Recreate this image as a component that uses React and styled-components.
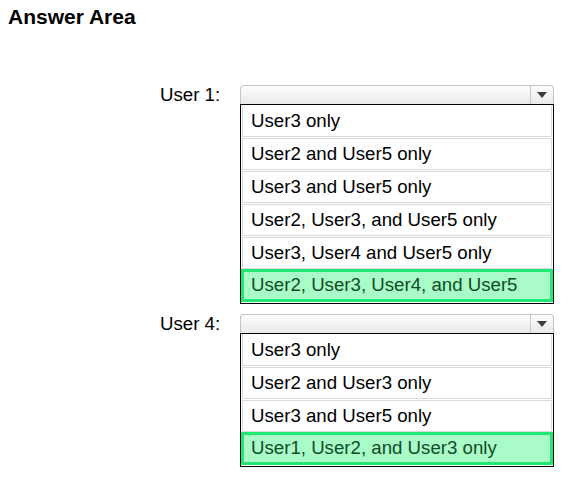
import React from 'react';
import styled, { createGlobalStyle } from 'styled-components';

const GlobalStyle = createGlobalStyle`
  body {
    margin: 0;
    background: #fff;
    font-family: Arial, "Liberation Sans", sans-serif;
    color: #000;
  }
`;

const Page = styled.div`
  padding: 5px 8px;
`;

const Title = styled.h1`
  margin: 0 0 56px;
  font-size: 21px;
  font-weight: bold;
  line-height: 24px;
`;

const Questions = styled.div`
  display: flex;
  flex-direction: column;
  gap: 10px;
  padding-left: 152px;
`;

const Row = styled.div`
  display: grid;
  grid-template-columns: 80px 314px;
`;

const Label = styled.div`
  font-size: 18.67px;
  line-height: 19px;
  height: 19px;
`;

const Control = styled.div`
  display: flex;
  flex-direction: column;
`;

const Select = styled.div`
  height: 18px;
  display: flex;
  justify-content: flex-end;
  border: 1px solid #c4c4c4;
  border-bottom: none;
  border-radius: 4px 4px 0 0;
  background: linear-gradient(#fdfdfd, #e9e9e9);
`;

const Arrow = styled.div`
  width: 22px;
  border-left: 1px solid #c8c8c8;
  display: flex;
  align-items: center;
  justify-content: center;

  &::after {
    content: '';
    border-left: 5px solid transparent;
    border-right: 5px solid transparent;
    border-top: 6px solid #3c3c3c;
  }
`;

const List = styled.div`
  border: 1px solid #000;
  display: flex;
  flex-direction: column;
  padding: 0 1px;
`;

const Option = styled.div`
  height: 32px;
  box-sizing: border-box;
  border: 1px solid #dadada;
  border-top-color: ${(p) => (p.$first ? '#fff' : '#dadada')};
  margin-top: ${(p) => (p.$first ? 0 : 1)}px;
  padding: 3px 0 0 8px;
  font-size: 18.67px;
  line-height: 24px;
  white-space: nowrap;
  color: #000;

  &:last-child {
    border-bottom-color: #fff;
  }

  ${(p) =>
    p.$picked &&
    `
    height: 33px;
    margin: 0 -1px 1px;
    border: 3px solid #1fe874;
    border-top-color: #1fe874;
    background: #a9fbc7;
    color: #0f4d26;
    padding: 1px 0 0 7px;
    &:last-child { border-bottom-color: #1fe874; }
  `}
`;

const questions = [
  {
    label: 'User 1:',
    options: [
      'User3 only',
      'User2 and User5 only',
      'User3 and User5 only',
      'User2, User3, and User5 only',
      'User3, User4 and User5 only',
      'User2, User3, User4, and User5',
    ],
    answer: 5,
  },
  {
    label: 'User 4:',
    options: [
      'User3 only',
      'User2 and User3 only',
      'User3 and User5 only',
      'User1, User2, and User3 only',
    ],
    answer: 3,
  },
];

const App = () => (
  <Page>
    <GlobalStyle />
    <Title>Answer Area</Title>
    <Questions>
      {questions.map((q) => (
        <Row key={q.label}>
          <Label>{q.label}</Label>
          <Control>
            <Select>
              <Arrow />
            </Select>
            <List>
              {q.options.map((opt, i) => (
                <Option key={opt} $first={i === 0} $picked={i === q.answer}>
                  {opt}
                </Option>
              ))}
            </List>
          </Control>
        </Row>
      ))}
    </Questions>
  </Page>
);

export default App;
